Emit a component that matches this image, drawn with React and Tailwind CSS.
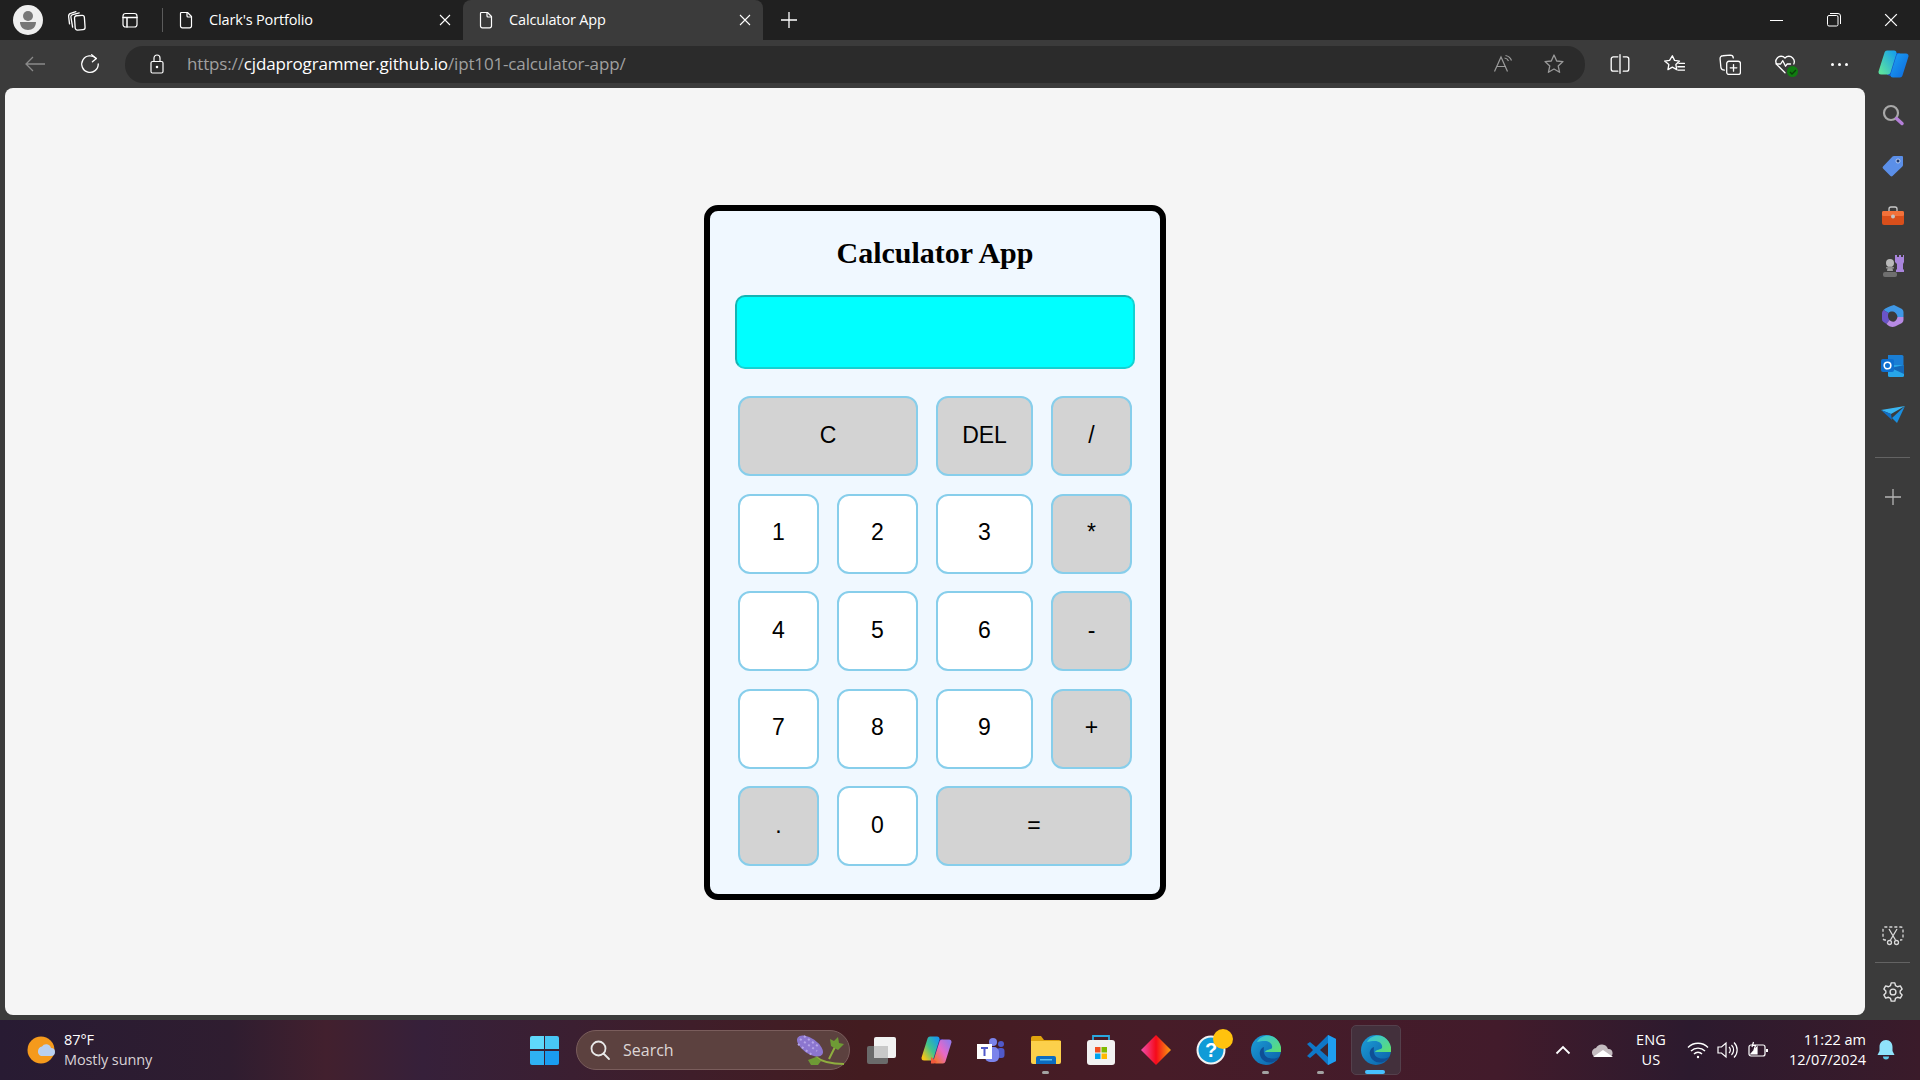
import React from "react";

const F = "font-['Open_Sans','Noto_Sans',sans-serif]";

function Slot({ w, h, className = "", children }) {
  return (
    <div className={`flex shrink-0 items-center justify-center relative ${className}`} style={{ width: w, height: h }}>
      {children}
    </div>
  );
}

const Stroke = ({ s = 20, v = 20, c = "#fff", sw = 1.2, children }) => (
  <svg width={s} height={s} viewBox={`0 0 ${v} ${v}`} fill="none" stroke={c} strokeWidth={sw} strokeLinecap="round" strokeLinejoin="round">
    {children}
  </svg>
);

const FileIc = () => (
  <Stroke s={20}>
    <path d="M5 2.5h6.5L15.5 6.5V16a1.8 1.8 0 0 1-1.8 1.8H6.3A1.8 1.8 0 0 1 4.5 16V4a1.5 1.5 0 0 1 .5-1.5z" />
    <path d="M11 2.5V6a1 1 0 0 0 1 1h3.5" />
  </Stroke>
);
const CloseIc = ({ s = 12 }) => (
  <svg width={s} height={s} viewBox="0 0 12 12" stroke="#fff" strokeWidth="1.1"><path d="M1 1l10 10M11 1L1 11" /></svg>
);

function Tab({ title, active }) {
  return (
    <div className={`flex h-10 w-[300px] shrink-0 items-center ${active ? "bg-[#3b3b3b] rounded-t-lg" : ""}`}>
      <Slot w={46} h={40}><FileIc /></Slot>
      <span className={`${F} w-[226px] text-[14.5px] tracking-[-0.15px] text-white`}>{title}</span>
      <Slot w={20} h={40}><CloseIc /></Slot>
    </div>
  );
}

function TitleBar() {
  return (
    <div className="flex h-10 items-center bg-[#202020]">
      <Slot w={56} h={40}>
        <svg width="30" height="30" viewBox="0 0 30 30">
          <circle cx="15" cy="15" r="15" fill="#efefef" />
          <circle cx="15" cy="11" r="5" fill="#777" />
          <path d="M7 17h16c0 5-3.5 8-8 8s-8-3-8-8z" fill="#777" />
        </svg>
      </Slot>
      <Slot w={42} h={40}>
        <Stroke s={22}>
          <rect x="8" y="6" width="9" height="13" rx="2" transform="rotate(-4 12 12)" />
          <path d="M6 16.5L4.5 7.5a2 2 0 0 1 1.6-2.4L12 3.5M3.2 13.5L2.4 7a3 3 0 0 1 2.4-3.3L9 2.4" />
        </Stroke>
      </Slot>
      <Slot w={64} h={40}>
        <Stroke s={20}>
          <rect x="3" y="3.5" width="14" height="13.5" rx="2.5" />
          <path d="M3 7.5h14M7 7.5V17" strokeWidth="1.5" />
        </Stroke>
      </Slot>
      <div className="h-6 w-px bg-[#5b5b5b]" />
      <div className="flex">
        <Tab title="Clark's Portfolio" />
        <Tab title="Calculator App" active />
      </div>
      <Slot w={52} h={40}>
        <svg width="18" height="18" viewBox="0 0 18 18" stroke="#fff" strokeWidth="1.3"><path d="M9 1v16M1 9h16" /></svg>
      </Slot>
      <div className="flex-1" />
      <Slot w={57} h={40}><div className="h-px w-[13px] bg-white" /></Slot>
      <Slot w={57} h={40}>
        <svg width="14" height="14" viewBox="0 0 14 14" fill="none" stroke="#fff" strokeWidth="1">
          <rect x="0.5" y="2.5" width="10.5" height="10.5" rx="1.5" />
          <path d="M3 .5h8a2.5 2.5 0 0 1 2.5 2.5v8" />
        </svg>
      </Slot>
      <Slot w={58} h={40}><CloseIc s={14} /></Slot>
    </div>
  );
}

function CopilotLogo({ id, a, b, c, d, arc }) {
  return (
    <svg width="32" height="30" viewBox="0 0 32 30">
      <defs>
        <linearGradient id={`${id}a`} x1="0" y1="1" x2="1" y2="0"><stop offset="0" stopColor={a} /><stop offset="1" stopColor={b} /></linearGradient>
        <linearGradient id={`${id}b`} x1="0" y1="0" x2="1" y2="1"><stop offset="0" stopColor={c} /><stop offset="1" stopColor={d} /></linearGradient>
      </defs>
      <path d="M13 5h9l1 9-6 13-6-2z" fill={arc} stroke={arc} strokeWidth="2" strokeLinejoin="round" />
      <path d="M10 4h7l-6 19H4z" fill={`url(#${id}a)`} stroke={`url(#${id}a)`} strokeWidth="5" strokeLinejoin="round" />
      <path d="M22 7h7l-6 19h-7z" fill={`url(#${id}b)`} stroke={`url(#${id}b)`} strokeWidth="5" strokeLinejoin="round" />
    </svg>
  );
}

function ToolBar() {
  return (
    <div className="flex h-12 items-center bg-[#3b3b3b]">
      <Slot w={70} h={48}>
        <svg width="22" height="18" viewBox="0 0 22 18" fill="none" stroke="#8a8a8a" strokeWidth="1.3"><path d="M21 9H2M9 2L2 9l7 7" /></svg>
      </Slot>
      <Slot w={40} h={48}>
        <Stroke s={22} v={20} sw={1.2}>
          <path d="M15.5 5A7.5 7.5 0 1 0 17.5 10" /><path d="M11.5 1.5L15.800 5l-3.600 3" />
        </Stroke>
      </Slot>
      <div className="mx-[15px] flex h-[37px] w-[1460px] items-center rounded-[18px] bg-[#2b2b2b]">
        <Slot w={62} h={37} className="pl-[2px]">
          <svg width="14" height="20" viewBox="0 0 14 20" fill="none" stroke="#fff" strokeWidth="1.2">
            <rect x="1" y="7.5" width="12" height="11.5" rx="1.5" /><path d="M4 7.5V4a3 3 0 0 1 6 0v3.5" /><circle cx="7" cy="13" r="0.7" fill="#fff" />
          </svg>
        </Slot>
        <span className={`${F} flex-1 text-[17px] tracking-[-0.15px] whitespace-nowrap text-[#a0a0a0]`}>
          https://<span className="text-white">cjdaprogrammer.github.io</span>/ipt101-calculator-app/
        </span>
        <Slot w={50} h={37}>
          <svg width="22" height="20" viewBox="0 0 22 20" fill="none" stroke="#9a9a9a" strokeWidth="1.2">
            <path d="M1.5 17.5L8 3l6.5 14.5M4 12.5h9" /><path d="M11.5 4a5 5 0 0 1 4 3M12.5 1.5a8 8 0 0 1 6 5" />
          </svg>
        </Slot>
        <Slot w={50} h={37} className="mr-[6px]">
          <svg width="22" height="22" viewBox="0 0 22 22" fill="none" stroke="#9a9a9a" strokeWidth="1.3" strokeLinejoin="round">
            <path d="M11 2l2.700 6 6.300.6-4.800 4.300 1.400 6.400L11 16l-5.600 3.300 1.400-6.400L2 8.600 8.300 8z" />
          </svg>
        </Slot>
      </div>
      <Slot w={8} h={48} />
      <Slot w={27} h={48} className="ml-[-2px] mr-[12px]">
        <Stroke s={22}>
          <path d="M8 3.5H4a2 2 0 0 0-2 2v9a2 2 0 0 0 2 2h4M13 3.5h3a2 2 0 0 1 2 2v9a2 2 0 0 1-2 2h-3" /><path d="M10 1.5v17" />
        </Stroke>
      </Slot>
      <Slot w={56} h={48} className="ml-[1px]">
        <Stroke s={22}>
          <path d="M8.5 2.5l2 4.200 4.500.6-3.300 3.200.8 4.600-4-2.200-4 2.200.8-4.600L1.5 7.300 6 6.700z" /><path d="M14.5 9.5h5M13.5 12.500h6M13.5 15.500h6" />
        </Stroke>
      </Slot>
      <Slot w={55} h={48}>
        <Stroke s={22}>
          <path d="M5 15.5c-2 0-3-1-3.300-2.500L1 5.500C.8 3.500 2 2.500 3.500 2.500L10 2c2 0 3 1 3 2.500" />
          <rect x="7" y="7.5" width="12.5" height="12" rx="2" /><path d="M13.200 10.500v6M10.200 13.500h6" />
        </Stroke>
      </Slot>
      <Slot w={55} h={48}>
        <Stroke s={22}>
          <path d="M10 18L3 11a5 5 0 0 1 0-6.500 4.800 4.800 0 0 1 7 0 4.800 4.800 0 0 1 7 0 5 5 0 0 1 1 5.500" /><path d="M2 10h4l2-3 2.500 5 1.500-2h3" />
        </Stroke>
        <div className="absolute left-[30px] top-[26px] flex h-[11px] w-[11px] items-center justify-center rounded-full bg-[#107c10]">
          <svg width="8" height="8" viewBox="0 0 8 8" fill="none" stroke="#0b3d0b" strokeWidth="1.3"><path d="M1 4l2 2 4-4" /></svg>
        </div>
      </Slot>
      <Slot w={55} h={48}>
        <div className="flex gap-[4px]">
          <div className="h-[3px] w-[3px] rounded-full bg-white" /><div className="h-[3px] w-[3px] rounded-full bg-white" /><div className="h-[3px] w-[3px] rounded-full bg-white" />
        </div>
      </Slot>
      <Slot w={52} h={48} className="mr-[1px]">
        <CopilotLogo id="cp" a="#5be2a0" b="#1aa3e8" c="#1a9cf0" d="#0f6ee0" arc="#1657c8" />
      </Slot>
    </div>
  );
}

const cellBase = "flex items-center justify-center h-20 pb-[2px] rounded-xl border-2 border-[#87ceeb] text-[23px] text-black font-['Liberation_Sans',Arial,sans-serif]";
const gray = "bg-[#d3d3d3]";
const white = "bg-white";

const keys = [
  ["C", gray, "col-span-2"], ["DEL", gray, ""], ["/", gray, ""],
  ["1", white, ""], ["2", white, ""], ["3", white, ""], ["*", gray, ""],
  ["4", white, ""], ["5", white, ""], ["6", white, ""], ["-", gray, ""],
  ["7", white, ""], ["8", white, ""], ["9", white, ""], ["+", gray, ""],
  [".", gray, ""], ["0", white, ""], ["=", gray, "col-span-2"],
];

function Calculator() {
  return (
    <div className="flex h-[695px] w-[462px] flex-col items-center rounded-[14px] border-[6px] border-black bg-[#f0f8ff]">
      <h1 className="mt-[21px] h-[42px] text-[30px] leading-[42px] font-bold text-black font-['Liberation_Serif','Times_New_Roman',serif]">Calculator App</h1>
      <div className="mt-[21px] h-[74px] w-[400px] rounded-[10px] border-2 border-t-[#14b4b4] border-r-[#14d2d2] border-b-[#14d2d2] border-l-[#14b4b4] bg-[#00ffff]" />
      <div className="mt-[27px] grid w-[394px] grid-cols-[81px_81px_97px_81px] gap-x-[18px] gap-y-[17.5px]">
        {keys.map(([k, bg, span]) => (
          <div key={k} className={`${cellBase} ${bg} ${span}`}>{k}</div>
        ))}
      </div>
    </div>
  );
}

function SideBar() {
  return (
    <div className="flex w-[55px] shrink-0 flex-col items-center bg-[#3b3b3b]">
      <Slot w={55} h={51} className="mt-[1px]">
        <svg width="24" height="24" viewBox="0 0 24 24" fill="none">
          <circle cx="10" cy="10" r="7" stroke="#a8a8a8" strokeWidth="2.2" /><path d="M15.5 15.5L21 20.5" stroke="#b47fd8" strokeWidth="3.5" strokeLinecap="round" />
        </svg>
      </Slot>
      <Slot w={55} h={51}>
        <svg width="22" height="22" viewBox="0 0 22 22"><path d="M12 1h8a1 1 0 0 1 1 1v8a2 2 0 0 1-.6 1.500L10.500 21a1.500 1.500 0 0 1-2 0L1 13.500a1.500 1.500 0 0 1 0-2L10.500 1.600A2 2 0 0 1 12 1z" fill="#5b8fe8" /><circle cx="16" cy="6" r="2" fill="#1f3a6e" stroke="#cfe0ff" strokeWidth="0.8" /></svg>
      </Slot>
      <Slot w={55} h={50}>
        <svg width="24" height="20" viewBox="0 0 24 20"><path d="M8 6V3a2 2 0 0 1 2-2h4a2 2 0 0 1 2 2v3" fill="none" stroke="#c9c9c9" strokeWidth="1.3" /><rect x="1" y="5" width="22" height="14" rx="2" fill="#d94f1b" /><rect x="1" y="5" width="22" height="5" rx="1.5" fill="#f2713a" /><circle cx="12" cy="10.5" r="2" fill="#c4c4c4" /></svg>
      </Slot>
      <Slot w={55} h={50}>
        <svg width="24" height="24" viewBox="0 0 24 24">
          <path d="M14 1h2v2h2V1h2v2h2V1h1v7l-1 2v5l1 1v2h-8v-2l1-1v-5l-2-2z" fill="#a985dc" />
          <circle cx="9" cy="9" r="4" fill="#b9b9b9" /><path d="M7 12h4l1 5H6z" fill="#a0a0a0" /><rect x="5" y="13" width="8" height="1.5" fill="#8a8a8a" /><rect x="2" y="18" width="14" height="5" rx="2" fill="#6f6f6f" />
        </svg>
      </Slot>
      <Slot w={55} h={50}>
        <svg width="24" height="24" viewBox="0 0 24 24">
          <path d="M13 1l8 4c1 1 1.500 2 1.500 3v5l-6 0c-.5-5-6-7-9-4L2.500 6c2-2 6-4 10.500-5z" fill="#3f98e6" />
          <path d="M2.500 6L7.500 9c-1 3-.5 5 1 7l-3 4-3-2a3 3 0 0 1-1.500-3V9c0-1 .5-2 1.500-3z" fill="#6a54c8" />
          <path d="M22.500 13v3c0 1-.5 2-1.500 3l-7 3.500c-3 1-6 0-8.500-2.500l3-4c3 3 7 2 8-3z" fill="#b78ae4" />
        </svg>
      </Slot>
      <Slot w={55} h={49}>
        <svg width="24" height="22" viewBox="0 0 24 22">
          <path d="M7 0h14a1.500 1.500 0 0 1 1.500 1.500V10H7z" fill="#1a7ed4" /><path d="M7 10h16v10.500a1.500 1.500 0 0 1-1.500 1.500H8.500A1.500 1.500 0 0 1 7 20.500z" fill="#27a5e8" /><path d="M10 13l13-3v9z" fill="#1468b8" />
          <rect x="0" y="4" width="13" height="13" rx="2" fill="#0e6fcf" /><circle cx="6.500" cy="10.500" r="3.300" fill="none" stroke="#fff" strokeWidth="1.6" />
        </svg>
      </Slot>
      <Slot w={55} h={50}>
        <svg width="24" height="18" viewBox="0 0 24 18"><path d="M0 4l24-4-14 8z" fill="#3ab6f2" /><path d="M24 0L16 17l-5-5z" fill="#1a8fe0" /><path d="M0 4l10 4 1 6z" fill="#0f6fc8" /></svg>
      </Slot>
      <div className="mt-[17px] h-px w-[35px] bg-[#636363]" />
      <Slot w={55} h={77}>
        <svg width="16" height="16" viewBox="0 0 16 16" stroke="#b5b5b5" strokeWidth="1.3"><path d="M8 0v16M0 8h16" /></svg>
      </Slot>
      <div className="flex-1" />
      <Slot w={55} h={36}>
        <svg width="22" height="20" viewBox="0 0 22 20" fill="none" stroke="#d8d8d8" strokeWidth="1.3">
          <path d="M4 14H3a2 2 0 0 1-2-2V3a2 2 0 0 1 2-2h16a2 2 0 0 1 2 2v9a2 2 0 0 1-2 2h-1" strokeDasharray="3 2" />
          <path d="M7 3l6.500 11M15 3L8.500 14" /><circle cx="7.500" cy="16.500" r="2" /><circle cx="14.500" cy="16.500" r="2" />
        </svg>
      </Slot>
      <div className="mt-[8px] h-px w-[35px] bg-[#636363]" />
      <Slot w={55} h={57}>
        <svg width="22" height="22" viewBox="0 0 24 24" fill="none" stroke="#e4e4e4" strokeWidth="1.5" strokeLinejoin="round">
          <circle cx="12" cy="12" r="3.2" />
          <path d="M10 2h4l.7 3 2.300 1.300 3-.9 2 3.400-2.200 2.200v2l2.200 2.200-2 3.400-3-.9-2.300 1.300-.7 3h-4l-.7-3L7 17.700l-3 .9-2-3.400L4.200 13v-2L2 8.800l2-3.400 3 .9L9.300 5z" />
        </svg>
      </Slot>
    </div>
  );
}

function Dot() {
  return <div className="absolute bottom-[6px] left-[24px] h-[3px] w-[7px] rounded-full bg-[#a3a3a3]" />;
}

const Edge = ({ id }) => (
  <svg width="30" height="30" viewBox="0 0 30 30">
    <defs>
      <linearGradient id={`${id}a`} x1="0" y1="0" x2="1" y2="1"><stop offset="0" stopColor="#1d9fd8" /><stop offset="1" stopColor="#0b5fa8" /></linearGradient>
      <linearGradient id={`${id}b`} x1="0" y1="0" x2="1" y2="1"><stop offset="0" stopColor="#35c1e1" /><stop offset="1" stopColor="#5fe06a" /></linearGradient>
    </defs>
    <circle cx="15" cy="15" r="15" fill={`url(#${id}a)`} />
    <path d="M6 7C9 1 17-1 23 2c5 3 8 9 7 15H14c1-3 6-2 7-4 1-4-3-7-7-7-3 0-6 .5-8 1z" fill={`url(#${id}b)`} />
    <path d="M13 12c-3 1-5 4-4 8 1 5 7 9 13 7 3-1 5-3 7-6-3 3-8 3-11 2-4-1-6-5-5-11z" fill="#0e4f96" />
  </svg>
);

function TaskBar() {
  return (
    <div className="flex h-[60px] items-center bg-[linear-gradient(90deg,#281b33_0%,#2f1d30_12%,#42202e_17%,#36203a_22%,#3f1e2a_36%,#431c20_45%,#471c28_60%,#421b2b_78%,#2c1a2e_88%,#3a1b2a_100%)]">
      <Slot w={28} h={60} className="ml-[27px]">
        <svg width="28" height="28" viewBox="0 0 28 28">
          <circle cx="14" cy="14" r="13.5" fill="#f59a1c" />
          <path d="M14 20a5 5 0 0 1 1-9.500 5 5 0 0 1 9 1.500 4 4 0 0 1 0 8z" fill="#b9d0ef" />
        </svg>
      </Slot>
      <div className={`${F} ml-[9px] flex w-[130px] flex-col text-[14.5px] leading-5 tracking-[-0.1px]`}>
        <span className="text-white">87°F</span>
        <span className="text-[#d9d2d6]">Mostly sunny</span>
      </div>
      <div className="w-[336px]" />
      <div className="grid h-[29px] w-[29px] grid-cols-2 grid-rows-2 gap-[1.5px]">
        <div className="rounded-tl-[2px] bg-[#5fd8fb]" /><div className="rounded-tr-[2px] bg-[#48c6f5]" />
        <div className="rounded-bl-[2px] bg-[#2fb1f3]" /><div className="rounded-br-[2px] bg-[#1a9cf0]" />
      </div>
      <div className="ml-[17px] flex h-10 w-[274px] items-center rounded-full border border-[#7a5d5c] bg-[#5c413f]">
        <Slot w={46} h={38}>
          <svg width="22" height="22" viewBox="0 0 22 22" fill="none" stroke="#e8e8e8" strokeWidth="1.8"><circle cx="9.5" cy="9.5" r="7" /><path d="M14.5 14.500L20 20" strokeLinecap="round" /></svg>
        </Slot>
        <span className={`${F} flex-1 text-[16px] text-[#ddd6d6]`}>Search</span>
        <Slot w={56} h={38}>
          <svg width="54" height="34" viewBox="0 0 54 34" fill="none">
            <ellipse cx="16" cy="13" rx="15" ry="7.500" transform="rotate(35 16 13)" fill="#8c76cf" />
            <path d="M6 6l17 12M10 3l15 11M4 11l14 11" stroke="#b6a5e8" strokeWidth="2" strokeDasharray="2 3" />
            <path d="M22 24c6 5 16 7 28 7M42 12l-7 14" stroke="#8fae3f" strokeWidth="2" />
            <path d="M36 6l4 2 4-4 1 6 5 1-6 6-7-4zM14 27l8-3 5 4-3 4-7 0z" fill="#6e9a35" />
          </svg>
        </Slot>
      </div>
      <div className="ml-[3px] flex">
        <Slot w={55} h={60}>
          <svg width="30" height="30" viewBox="0 0 30 30">
            <rect x="1" y="11" width="21" height="18" rx="2" fill="#6a6a6a" /><rect x="8" y="2" width="22" height="21" rx="2" fill="#f2f2f2" /><rect x="8" y="11" width="14" height="12" fill="#c8c8c8" />
          </svg>
        </Slot>
        <Slot w={55} h={60}>
          <svg width="32" height="30" viewBox="0 0 32 30">
            <defs>
              <linearGradient id="tc1" x1="0" y1="1" x2="1" y2="0"><stop offset="0" stopColor="#f5c518" /><stop offset="0.5" stopColor="#3fc38c" /><stop offset="1" stopColor="#1a9ae8" /></linearGradient>
              <linearGradient id="tc2" x1="0" y1="1" x2="1" y2="0"><stop offset="0" stopColor="#f0763a" /><stop offset="0.5" stopColor="#e868c8" /><stop offset="1" stopColor="#9a78e8" /></linearGradient>
            </defs>
            <path d="M13 5h9l1 9-6 13-6-2z" fill="#2c2a8c" stroke="#2c2a8c" strokeWidth="2" strokeLinejoin="round" />
            <path d="M10 4h7l-6 19H4z" fill="url(#tc1)" stroke="url(#tc1)" strokeWidth="5" strokeLinejoin="round" />
            <path d="M22 7h7l-6 19h-7z" fill="url(#tc2)" stroke="url(#tc2)" strokeWidth="5" strokeLinejoin="round" />
            <path d="M11 22l6 5-3 1.500h-3z" fill="#f05a3c" />
          </svg>
        </Slot>
        <Slot w={55} h={60}>
          <svg width="28" height="26" viewBox="0 0 28 26">
            <circle cx="16" cy="5" r="4" fill="#7b83eb" /><circle cx="24" cy="7" r="3" fill="#5059c9" /><rect x="20" y="11" width="7.5" height="10" rx="3" fill="#5059c9" /><rect x="8" y="10" width="14" height="15" rx="5" fill="#7b83eb" />
            <rect x="0" y="7" width="15" height="15" fill="#fff" /><path d="M4 10h7v2H8.500v7h-2v-7H4z" fill="#5059c9" />
          </svg>
        </Slot>
        <Slot w={55} h={60}>
          <svg width="30" height="28" viewBox="0 0 30 28">
            <path d="M0 2a2 2 0 0 1 2-2h8l3 4h15a2 2 0 0 1 2 2v3H0z" fill="#e0a40e" /><path d="M0 5h30v21a2 2 0 0 1-2 2H2a2 2 0 0 1-2-2z" fill="#fcd04b" /><path d="M5 28v-6a2 2 0 0 1 2-2h16a2 2 0 0 1 2 2v6z" fill="#0c6cc0" /><rect x="9" y="23" width="12" height="1.5" fill="#5fc0f0" />
          </svg>
          <Dot />
        </Slot>
        <Slot w={55} h={60}>
          <svg width="30" height="30" viewBox="0 0 30 30">
            <path d="M7 6V1h16v5" fill="none" stroke="#2aa8e0" strokeWidth="1.8" /><rect x="1" y="5" width="28" height="25" rx="3" fill="#f2f2f2" /><rect x="9" y="12" width="5.5" height="5.5" fill="#f25022" /><rect x="15.5" y="12" width="5.5" height="5.5" fill="#7fba00" /><rect x="9" y="18.5" width="5.5" height="5.5" fill="#00a4ef" /><rect x="15.5" y="18.5" width="5.5" height="5.5" fill="#ffb900" />
          </svg>
        </Slot>
        <Slot w={55} h={60}>
          <svg width="30" height="30" viewBox="0 0 30 30">
            <defs><linearGradient id="dm" x1="0" y1="0" x2="1" y2="0"><stop offset="0" stopColor="#f04fb0" /><stop offset="0.5" stopColor="#f50a1a" /><stop offset="1" stopColor="#f8a010" /></linearGradient></defs>
            <path d="M15 0l15 15-15 15L0 15z" fill="url(#dm)" />
          </svg>
        </Slot>
        <Slot w={55} h={60}>
          <svg width="30" height="30" viewBox="0 0 30 30">
            <circle cx="15" cy="15" r="13.5" fill="#0f9bd7" stroke="#f2f2f2" strokeWidth="2" />
            <text x="15" y="22" fontSize="20" fontWeight="bold" textAnchor="middle" fill="#fff" fontFamily="Liberation Sans">?</text>
          </svg>
          <div className="absolute left-[30px] top-[9px] h-5 w-5 rounded-full bg-[#ffc20e]" />
        </Slot>
        <Slot w={55} h={60}><Edge id="e1" /><Dot /></Slot>
        <Slot w={55} h={60}>
          <svg width="30" height="30" viewBox="0 0 30 30">
            <path d="M22 0l8 4v22l-8 4-12-12-6 5-3-2 6-6-6-6 3-2 6 5z" fill="#0f78c8" />
            <path d="M22 0l8 4v22l-8 4z" fill="#1f9ef0" />
            <path d="M22 8l-8 7 8 7z" fill="#3d2630" />
          </svg>
          <Dot />
        </Slot>
        <Slot w={55} h={60}>
          <div className="flex h-[50px] w-[50px] items-center justify-center rounded-[5px] border border-[#54404c] bg-[#43303c]"><Edge id="e2" /></div>
          <div className="absolute bottom-[6px] left-[17px] h-[4px] w-5 rounded-full bg-[#47c0ff]" />
        </Slot>
      </div>
      <div className="w-[140px]" />
      <Slot w={40} h={60}>
        <svg width="16" height="10" viewBox="0 0 16 10" fill="none" stroke="#fff" strokeWidth="1.8"><path d="M1.5 8.5L8 2l6.500 6.500" /></svg>
      </Slot>
      <Slot w={40} h={60} className="mr-[4px]">
        <svg width="22" height="14" viewBox="0 0 22 14"><path d="M5 14a4.500 4.500 0 0 1-1-9 6.500 6.500 0 0 1 12 1 4 4 0 0 1 1 8z" fill="#c4bcc0" /><path d="M1 14l10-7 10 7z" fill="#fff" /></svg>
      </Slot>
      <div className={`${F} flex w-12 flex-col items-center text-[14.5px] leading-5 tracking-[0.2px] text-white`}>
        <span>ENG</span><span>US</span>
      </div>
      <Slot w={22} h={60} className="ml-[12px]">
        <svg width="22" height="18" viewBox="0 0 22 18" fill="none" stroke="#fff" strokeWidth="1.4"><path d="M1 6.5a14 14 0 0 1 20 0M4 10a10 10 0 0 1 14 0M7 13a5.500 5.500 0 0 1 8 0" /><circle cx="11" cy="16" r="1.2" fill="#fff" stroke="none" /></svg>
      </Slot>
      <Slot w={38} h={60}>
        <svg width="22" height="18" viewBox="0 0 22 18" fill="none" stroke="#fff" strokeWidth="1.2"><path d="M1 6h3.500L9 2v14l-4.500-4H1z" /><path d="M12 6a4 4 0 0 1 0 6M14.500 4a7 7 0 0 1 0 10M17 1.500a10.500 10.500 0 0 1 0 15" /></svg>
      </Slot>
      <Slot w={22} h={60}>
        <svg width="21" height="18" viewBox="0 0 21 18" fill="none" stroke="#fff" strokeWidth="1.2"><rect x="1" y="4" width="16" height="11" rx="2" /><path d="M19 8v3" strokeWidth="2" /><path d="M3 13l6-7v7z" fill="#fff" /><path d="M4 6L5.500 1 4.500 4.500h3L6 9" /></svg>
      </Slot>
      <div className={`${F} ml-[3px] flex w-[94px] flex-col items-end text-[14.5px] leading-5 text-white`}>
        <span>11:22 am</span><span>12/07/2024</span>
      </div>
      <Slot w={38} h={60} className="ml-[1px]">
        <svg width="18" height="20" viewBox="0 0 18 20"><path d="M9 0c4 0 6.500 3 6.500 7v4l2 4H.5l2-4V7C2.500 3 5 0 9 0z" fill="#8fe3fb" /><path d="M6 16.500h6a3 3 0 0 1-6 0z" fill="#5fc8e8" /></svg>
      </Slot>
    </div>
  );
}

export default function App() {
  return (
    <div className="flex h-[1080px] w-[1920px] flex-col overflow-hidden bg-[#3b3b3b]">
      <TitleBar />
      <ToolBar />
      <div className="flex h-[932px] items-stretch">
        <div className="w-[5px] shrink-0" />
        <div className="mb-[5px] flex flex-1 items-center justify-center rounded-lg bg-[#f5f5f5] pt-[2px]">
          <Calculator />
        </div>
        <SideBar />
      </div>
      <TaskBar />
    </div>
  );
}
